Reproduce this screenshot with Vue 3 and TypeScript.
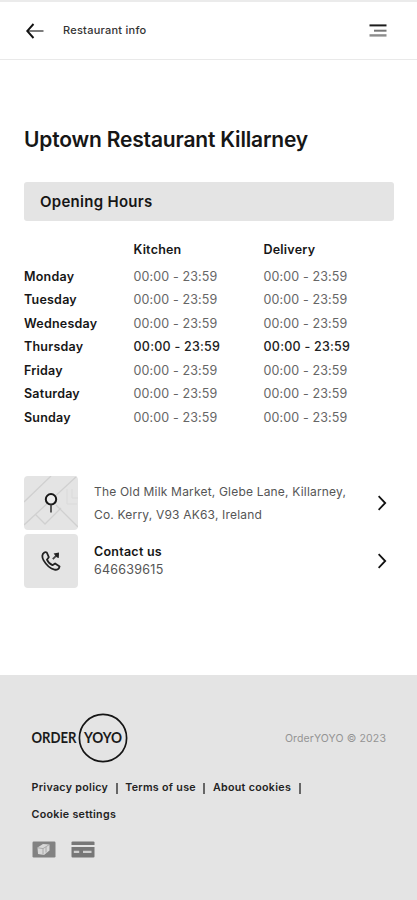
<script setup lang="ts">
interface DayHours {
  day: string
  kitchen: string
  delivery: string
  today?: boolean
}

const span = '00:00 - 23:59'
const hours: DayHours[] = [
  { day: 'Monday', kitchen: span, delivery: span },
  { day: 'Tuesday', kitchen: span, delivery: span },
  { day: 'Wednesday', kitchen: span, delivery: span },
  { day: 'Thursday', kitchen: span, delivery: span, today: true },
  { day: 'Friday', kitchen: span, delivery: span },
  { day: 'Saturday', kitchen: span, delivery: span },
  { day: 'Sunday', kitchen: span, delivery: span },
]

const links: string[] = ['Privacy policy', 'Terms of use', 'About cookies', 'Cookie settings']
</script>

<template>
  <div class="page">
    <header class="topbar">
      <svg class="back" width="18" height="16" viewBox="0 0 18 16">
        <path d="M1 8H17.5" stroke="#666" stroke-width="1.7" fill="none" />
        <path d="M7.5 1L1.2 8L7.5 15" stroke="#111" stroke-width="1.9" fill="none" />
      </svg>
      <span class="topbar-title">Restaurant info</span>
      <svg class="menu" width="18" height="13" viewBox="0 0 18 13">
        <path d="M0.5 1.4H17.5" stroke="#1c1c1c" stroke-width="2" />
        <path d="M5 6.7H17.5" stroke="#777" stroke-width="2" />
        <path d="M0.5 11.4H17.5" stroke="#8c8c8c" stroke-width="2.4" />
      </svg>
    </header>

    <main class="content">
      <h1 class="name">Uptown Restaurant Killarney</h1>
      <h2 class="section">Opening Hours</h2>

      <div class="hours">
        <div class="row head">
          <span></span>
          <span>Kitchen</span>
          <span>Delivery</span>
        </div>
        <div v-for="h in hours" :key="h.day" class="row" :class="{ today: h.today }">
          <span class="day">{{ h.day }}</span>
          <span class="time">{{ h.kitchen }}</span>
          <span class="time">{{ h.delivery }}</span>
        </div>
      </div>

      <div class="cards">
        <div class="card">
          <svg class="tile" width="54" height="54" viewBox="0 0 54 54">
            <rect width="54" height="54" fill="#e4e4e4" />
            <g fill="none" stroke="#d0d0d0" stroke-width="1.3">
              <path d="M0 26L27 0M0 49L53 0M11 38L21 48L37 32M32 29L54 51" />
              <path d="M43 13V28H53M48 13V22H54" stroke="#dadada" stroke-width="1" />
            </g>
            <circle cx="27" cy="23.3" r="5.2" fill="#ececec" stroke="#181818" stroke-width="2" />
            <path d="M27 28.5V36.5" stroke="#444" stroke-width="1.7" />
          </svg>
          <p class="address">The Old Milk Market, Glebe Lane, Killarney, Co. Kerry, V93 AK63, Ireland</p>
          <svg class="chevron" width="9" height="16" viewBox="0 0 9 16">
            <path d="M0.6 1.2L7.2 8L0.6 14.8" fill="none" stroke="#111" stroke-width="1.8" />
          </svg>
        </div>
        <div class="card">
          <svg class="tile" width="54" height="54" viewBox="0 0 54 54">
            <rect width="54" height="54" fill="#e4e4e4" />
            <path
              d="M20.2 18.6C17.8 20 17.8 23.4 19.6 26.4C22.3 31 26.2 34.6 30.5 35.6C33 36.2 35.2 35 35.6 32.4L31.1 29.4L28.4 31.2C26.3 30.4 24 28 22.9 25.7L24.8 23.2L22.8 18.5Q21.5 17.8 20.2 18.6Z"
              fill="none" stroke="#222" stroke-width="1.8" stroke-linejoin="round"
            />
            <path d="M28.8 25.2L33.6 20.4" stroke="#444" stroke-width="1.8" />
            <path d="M29.6 19.4L35 18.4L34.8 24L33 23.6L30.6 20.8Z" fill="#222" />
          </svg>
          <div class="contact">
            <strong>Contact us</strong>
            <span>646639615</span>
          </div>
          <svg class="chevron" width="9" height="16" viewBox="0 0 9 16">
            <path d="M0.6 1.2L7.2 8L0.6 14.8" fill="none" stroke="#111" stroke-width="1.8" />
          </svg>
        </div>
      </div>
    </main>

    <footer class="footer">
      <div class="brand">
        <svg width="98" height="50" viewBox="0 0 98 50">
          <circle cx="72" cy="25" r="23.6" fill="none" stroke="#151515" stroke-width="1.7" />
          <text class="logo" x="0.5" y="30.2" textLength="45" lengthAdjust="spacingAndGlyphs">ORDER</text>
          <text class="logo" x="53" y="30.2" textLength="38" lengthAdjust="spacingAndGlyphs">YOYO</text>
        </svg>
        <span class="copyright">OrderYOYO © 2023</span>
      </div>
      <nav class="links">
        <template v-for="(l, i) in links" :key="l">
          <a>{{ l }}</a><i v-if="i < links.length - 1"></i>
        </template>
      </nav>
      <div class="pay">
        <svg width="24" height="17" viewBox="0 0 24 17">
          <rect x="0.5" y="0.5" width="23" height="16" rx="1.2" fill="#828282" />
          <path d="M5.5 6.5L11 3L17.5 3.5V9.5L12 14L6 13Z" fill="#d8d8d8" />
          <path d="M11 7.5V13.5M6 6.8L11 7.6L17 3.8M14 6V11.5" stroke="#a5a5a5" stroke-width="0.9" fill="none" />
        </svg>
        <svg width="24" height="17" viewBox="0 0 24 17">
          <path d="M0.5 4V1.6Q0.5 0.5 1.6 0.5H22.4Q23.5 0.5 23.5 1.6V4Z" fill="#777" />
          <path d="M0.5 6H23.5V15.4Q23.5 16.5 22.4 16.5H1.6Q0.5 16.5 0.5 15.4Z" fill="#777" />
          <path d="M2.8 10.8H8.2M12 10.8H20.5" stroke="#cfcfcf" stroke-width="2.2" />
        </svg>
      </div>
    </footer>
  </div>
</template>

<style>
body {
  background: #fff;
}
</style>

<style scoped>
.page {
  display: flex;
  flex-direction: column;
  height: 900px;
  overflow: hidden;
  box-sizing: border-box;
  border-top: 2px solid #ebebeb;
  background: #fff;
  color: #161616;
  font-family: Inter, 'Liberation Sans', sans-serif;
}
.topbar {
  display: flex;
  align-items: center;
  height: 57px;
  flex: none;
  padding: 0 30px 0 26px;
  border-bottom: 1px solid #e9e9e9;
}
.topbar-title {
  margin: -2px 0 0 19px;
  font-size: 11px;
  font-weight: 500;
  letter-spacing: 0.25px;
  color: #333;
}
.menu {
  margin-left: auto;
}
.content {
  padding: 63px 23px 0 24px;
  flex: none;
  height: 552px;
}
.name {
  margin: 0;
  font-size: 21px;
  line-height: 34px;
  font-weight: 600;
  letter-spacing: -0.18px;
  white-space: nowrap;
}
.section {
  margin: 25px 0 0;
  padding: 1px 0 0 16px;
  border-radius: 3px;
  background: #e4e4e4;
  font-size: 15px;
  line-height: 38px;
  font-weight: 600;
  letter-spacing: 0.28px;
}
.hours {
  margin-top: 16.5px;
  font-size: 12.5px;
}
.row {
  display: grid;
  grid-template-columns: 109.5px 130px 1fr;
  line-height: 23.55px;
  white-space: nowrap;
}
.head {
  line-height: 24px;
  margin-bottom: 3px;
}
.head,
.day {
  font-weight: 600;
  letter-spacing: 0.22px;
}
.time {
  color: #666;
  letter-spacing: 0.12px;
}
.today .time {
  color: #222;
  font-weight: 500;
  letter-spacing: 0.25px;
}
.cards {
  display: grid;
  gap: 4px;
  margin-top: 46.5px;
}
.card {
  display: flex;
  align-items: center;
  height: 54px;
  padding-right: 7px;
}
.tile {
  flex: none;
  border-radius: 4px;
}
.address {
  width: 265px;
  margin: 0 0 0 16px;
  font-size: 12px;
  line-height: 23px;
  letter-spacing: 0.19px;
  color: #555;
}
.contact {
  display: grid;
  margin-left: 16px;
  font-size: 12.5px;
  line-height: 17.5px;
  letter-spacing: 0.25px;
  color: #555;
}
.contact strong {
  font-weight: 600;
  color: #161616;
}
.chevron {
  margin-left: auto;
  flex: none;
}
.footer {
  flex: 1;
  padding: 38px 31px 0;
  background: #e4e4e4;
}
.brand {
  display: flex;
  align-items: center;
  justify-content: space-between;
}
.logo {
  font-family: Lato, sans-serif;
  font-size: 15px;
  font-weight: 700;
  fill: #1a1a1a;
}
.copyright {
  font-size: 10.5px;
  letter-spacing: 0.13px;
  color: #949494;
}
.links {
  display: flex;
  flex-wrap: wrap;
  align-items: center;
  margin: 12px 0 0 0.5px;
  font-size: 10.7px;
  line-height: 26.5px;
  font-weight: 600;
  letter-spacing: 0.3px;
  color: #222;
}
.links i {
  width: 2px;
  height: 11px;
  margin: 0 7.5px;
  background: #666;
}
.pay {
  display: flex;
  gap: 15px;
  margin: 13px 0 0 0.5px;
}
</style>
